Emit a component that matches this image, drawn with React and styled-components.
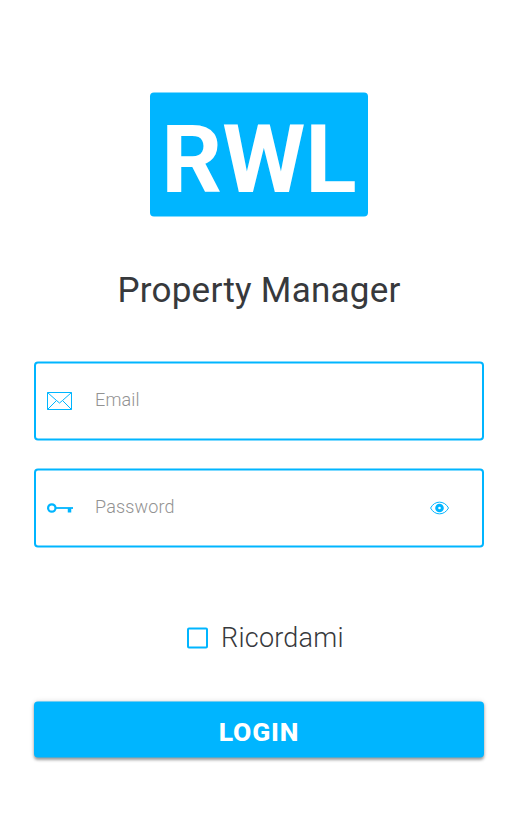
import React from 'react';
import styled, { createGlobalStyle } from 'styled-components';

const blue = '#00b5ff';

const GlobalStyle = createGlobalStyle`
  * { box-sizing: border-box; }
  body { margin: 0; background: #fff; font-family: Roboto, sans-serif; }
`;

const Page = styled.main`
  width: 521px;
  height: 816px;
  padding: 93px 37px 0 34px;
  display: flex;
  flex-direction: column;
  transform: translateY(-0.5px);
`;

const Logo = styled.div`
  align-self: center;
  width: 218px;
  height: 124px;
  border-radius: 4px;
  background: ${blue};
  color: #fff;
  font-size: 95px;
  font-weight: 700;
  line-height: 133px;
  text-align: center;
`;

const Title = styled.h1`
  margin: 53px 0 0;
  height: 42px;
  line-height: 42px;
  font-size: 35px;
  font-weight: 400;
  letter-spacing: 0.25px;
  color: #37393c;
  text-align: center;
`;

const Fields = styled.div`
  margin-top: 50px;
  display: flex;
  flex-direction: column;
  gap: 28px;
`;

const Field = styled.label`
  height: 79px;
  display: flex;
  align-items: center;
  border: 2px solid ${blue};
  border-radius: 4px;
  padding: 0 32px 0 11px;
  color: ${blue};
`;

const Input = styled.input`
  flex: 1;
  min-width: 0;
  margin: 0 0 5px 22px;
  padding: 0;
  border: 0;
  outline: 0;
  background: transparent;
  font: 300 18px Roboto, sans-serif;
  letter-spacing: 0.15px;
  color: #333;
  &::placeholder { color: #929292; opacity: 1; }
`;

const Remember = styled.label`
  margin-top: 72px;
  height: 36px;
  display: flex;
  align-items: center;
  padding-left: 153px;
  gap: 13px;
  font-size: 27px;
  font-weight: 300;
  line-height: 36px;
  letter-spacing: 0.25px;
  color: #37393c;
`;

const Checkbox = styled.span`
  width: 21px;
  height: 21px;
  border: 2px solid ${blue};
  border-radius: 2px;
`;

const LoginButton = styled.button`
  margin-top: 46px;
  height: 56px;
  padding: 3px 0 0;
  border: 0;
  border-radius: 4px;
  background: ${blue};
  box-shadow: 0 2px 3px rgba(0, 0, 0, 0.35), 0 0 5px rgba(0, 0, 0, 0.12);
  color: #fff;
  font: 800 26.5px Roboto, sans-serif;
  letter-spacing: 0.8px;
`;

const Icon = styled.svg`
  flex: none;
  display: block;
  overflow: visible;
`;

export default function App() {
  return (
    <>
      <GlobalStyle />
      <Page>
        <Logo>RWL</Logo>
        <Title>Property Manager</Title>
        <Fields>
          <Field>
            <Icon width="26" height="18" viewBox="0 0.5 26 18" fill="none" stroke="currentColor">
              <path d="M.5.5h24v17H.5zM.5.5l9 8 3 2.500 3-2.500 9-8M.5 17.500l9-9M24.500 17.500l-9-9" />
            </Icon>
            <Input type="email" placeholder="Email" />
          </Field>
          <Field>
            <Icon width="26" height="12" viewBox="0 0.5 26 12" fill="none" stroke="currentColor">
              <circle cx="4.800" cy="6" r="3.700" strokeWidth="2.200" />
              <path d="M9 6h17" strokeWidth="1.800" />
              <path d="M22.500 6v4.500" strokeWidth="3.500" />
            </Icon>
            <Input type="password" placeholder="Password" />
            <Icon width="20" height="14" viewBox="0 0.5 20 14" fill="none" stroke="currentColor">
              <path d="M.6 7C4.500-.8 14.500-.8 18.500 7 14.500 14.800 4.500 14.800 .6 7z" />
              <circle cx="9.500" cy="7" r="2.800" strokeWidth="3" />
            </Icon>
          </Field>
        </Fields>
        <Remember><Checkbox />Ricordami</Remember>
        <LoginButton>LOGIN</LoginButton>
      </Page>
    </>
  );
}
